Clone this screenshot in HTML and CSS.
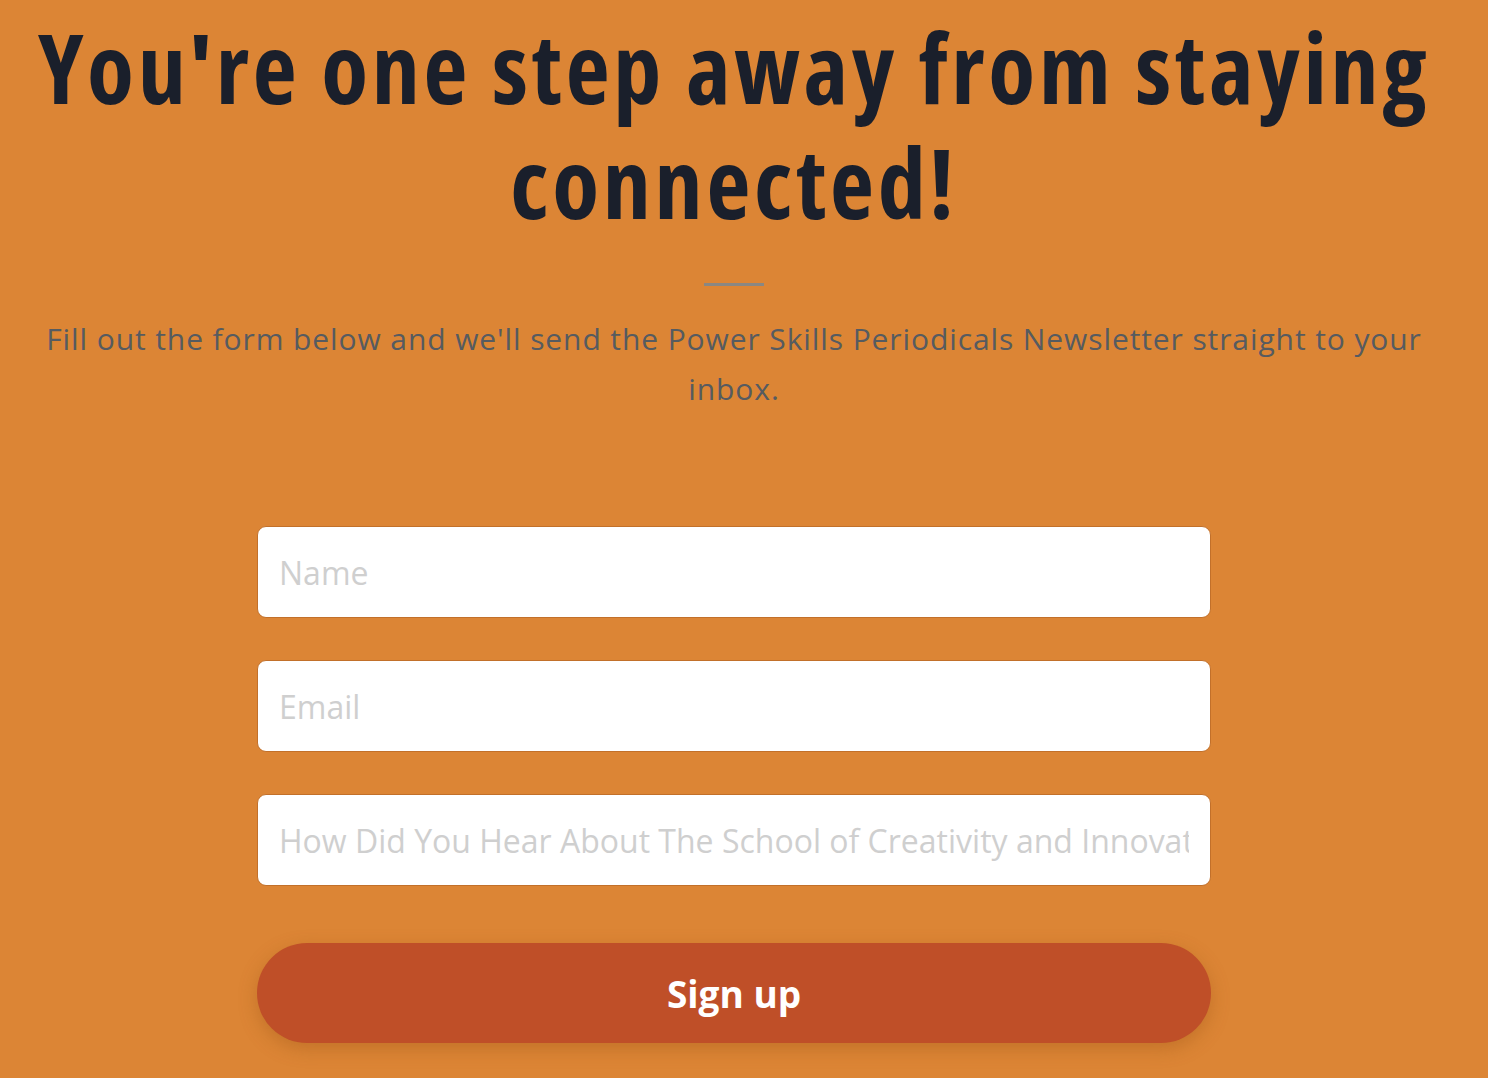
FILE: index.html
```html
<!DOCTYPE html>
<html lang="en">
<head>
<meta charset="utf-8">
<title>Newsletter signup</title>
<link rel="stylesheet" href="styles.css">
</head>
<body>
<main class="page">
  <h1 class="title">You're one step away from staying connected!</h1>
  <div class="divider"></div>
  <p class="lead">Fill out the form below and we'll send the Power Skills Periodicals Newsletter straight to your inbox.</p>
  <form class="form">
    <input class="field" type="text" placeholder="Name">
    <input class="field" type="email" placeholder="Email">
    <input class="field" type="text" placeholder="How Did You Hear About The School of Creativity and Innovation?">
    <button class="btn" type="button">Sign up</button>
  </form>
</main>
</body>
</html>
```
FILE: styles.css
```css
html, body {
  margin: 0;
  padding: 0;
  background: #dc8535;
}
body {
  height: 1078px;
  overflow: hidden;
}
.page {
  display: flex;
  flex-direction: column;
  align-items: center;
  padding: 9px 30px 0 10px;
}
.title {
  margin: 0;
  font-family: "Open Sans", sans-serif;
  font-weight: 700;
  font-stretch: 75%;
  font-size: 96px;
  line-height: 115px;
  letter-spacing: 3.7px;
  color: #1a1f2b;
  text-align: center;
}
.divider {
  width: 60px;
  height: 3px;
  background: #8a8782;
  margin-top: 44px;
}
.lead {
  margin: 28px 0 0;
  font-family: "Open Sans", sans-serif;
  font-weight: 400;
  font-size: 30px;
  line-height: 50px;
  letter-spacing: 0.9px;
  color: #565b60;
  text-align: center;
  max-width: 1430px;
}
.form {
  display: flex;
  flex-direction: column;
  width: 954px;
  margin-top: 112px;
  gap: 42px;
}
.field {
  box-sizing: border-box;
  height: 92px;
  width: 100%;
  border: 1px solid #c2702a;
  border-radius: 9px;
  background: #fff;
  padding: 0 21px;
  font-family: "Open Sans", sans-serif;
  font-size: 32px;
  color: #333;
  outline: none;
}
.field::placeholder {
  color: #cfcfcf;
}
.btn {
  margin-top: 15px;
  height: 100px;
  border: none;
  border-radius: 50px;
  background: #bf4f28;
  color: #fff;
  font-family: "Open Sans", sans-serif;
  font-weight: 700;
  font-size: 37px;
  box-shadow: 0 6px 18px rgba(150, 80, 20, 0.35);
}
```
